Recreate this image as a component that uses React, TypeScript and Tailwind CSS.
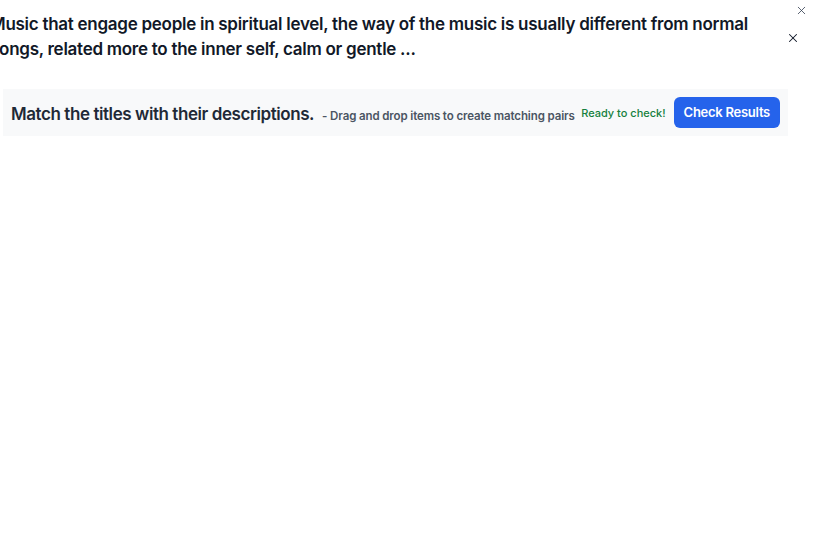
import { X } from "lucide-react";

const App = () => {
	return (
		<div className="relative h-[538px] w-[823px] overflow-hidden bg-white font-['Inter',sans-serif]">
			<button className="absolute right-[15px] top-[4px] text-gray-700">
				<X size={13} strokeWidth={1.5} />
			</button>
			<button className="absolute right-[23px] top-[31px] text-gray-900">
				<X size={14} strokeWidth={1.75} />
			</button>

			<div className="pt-[12px] pr-[60px]">
				<h2 className="-ml-[10px] text-[17px] font-semibold leading-[25px] tracking-[-0.016em] text-[#111827]">
					Music that engage people in spiritual level, the way of the music is
					usually different from normal songs, related more to the inner self,
					calm or gentle ...
				</h2>
			</div>

			<div className="mt-[27px] ml-[3px] flex h-[47px] w-[785px] items-center justify-between bg-[#f8f9fa] pl-[8px] pr-[8px]">
				<div className="flex items-baseline gap-[8px] whitespace-nowrap pt-[4px]">
					<p className="text-[17px] font-semibold tracking-[-0.025em] text-[#1f2937]">
						Match the titles with their descriptions.
					</p>
					<p className="text-[11.5px] font-semibold tracking-[-0.01em] text-[#4b5563]">
						- Drag and drop items to create matching pairs
					</p>
				</div>
				<div className="flex items-center gap-[8px] whitespace-nowrap">
					<p className="pt-[1px] text-[11px] font-medium text-[#15803d]">
						Ready to check!
					</p>
					<button className="h-[31px] rounded-md bg-[#2563eb] px-[10px] text-[13px] font-semibold tracking-[-0.02em] text-white">
						Check Results
					</button>
				</div>
			</div>
		</div>
	);
};

export default App;
